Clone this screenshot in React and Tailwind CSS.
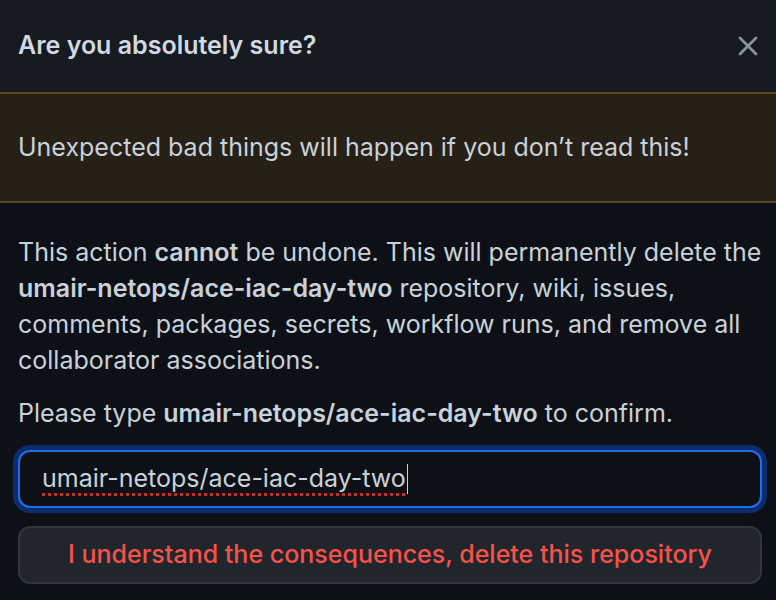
import { X } from 'lucide-react';

export default function App() {
    return (
        <div className="w-[776px] h-[600px] overflow-hidden bg-[#0d1117] font-['Inter',sans-serif] text-[#c9d1d9]">
            {/* Header */}
            <div className="h-[92px] bg-[#161b22] flex items-center justify-between pl-[18px] pr-[12px]">
                <h1 className="font-semibold text-[25px] text-[#d2d9e0]">Are you absolutely sure?</h1>
                <X className="w-[32px] h-[32px] text-[#8b949e]" strokeWidth={2} />
            </div>

            {/* Warning flash */}
            <div className="h-[111px] bg-[#262017] border-y-2 border-[#5e4519] flex items-center px-[18px]">
                <p className="text-[25px]">
                    Unexpected bad things will happen if you don’t read this!
                </p>
            </div>

            {/* Body */}
            <div className="pl-[18px] pr-[14px] pt-[31px]">
                <p className="text-[25px] leading-[36px]">
                    This action <strong className="font-semibold">cannot</strong> be undone. This will permanently delete the{' '}
                    <strong className="font-semibold">umair-netops/ace-iac-day-two</strong> repository, wiki, issues, comments, packages, secrets, workflow runs, and remove all collaborator associations.
                </p>
                <p className="text-[25px] leading-[36px] mt-[17px]">
                    Please type <strong className="font-semibold">umair-netops/ace-iac-day-two</strong> to confirm.
                </p>

                <div className="mt-[19px] h-[58px] rounded-[12px] border-2 border-[#1f6feb] bg-[#0d1117] shadow-[0_0_0_5px_#0c2d6b] flex items-center px-[22px]">
                    <span className="text-[25px] text-[#c9d1d9] underline decoration-dotted decoration-[#c0302a] decoration-[3px] underline-offset-[6px]">
                        umair-netops/ace-iac-day-two
                    </span>
                    <span className="w-px h-[30px] bg-[#c9d1d9] ml-[1px]" />
                </div>

                <button className="mt-[18px] w-full h-[58px] rounded-[12px] border-2 border-[#30363d] bg-[#21262d] text-[25px] font-medium text-[#f85149]">
                    I understand the consequences, delete this repository
                </button>
            </div>
        </div>
    );
}
